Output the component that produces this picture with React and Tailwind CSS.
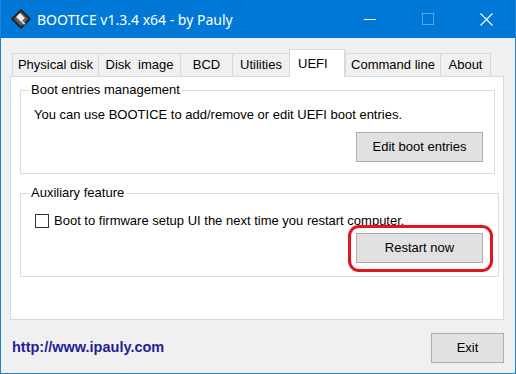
import React from "react";

const tabs = [
    { label: "Physical disk", w: "w-[86px]" },
    { label: "Disk  image", w: "w-[82px]" },
    { label: "BCD", w: "w-[52px]" },
    { label: "Utilities", w: "w-[57px]" },
    { label: "UEFI", w: "w-[56px]", active: true },
    { label: "Command line", w: "w-[95px]" },
    { label: "About", w: "w-[51px]" },
];

const AppIcon = () => (
    <svg width="20" height="20" viewBox="0 0 20 20">
        <polygon points="10,0.5 19.5,10 10,19.5 0.5,10" fill="#2e2e2e" stroke="#0d0d0d" strokeWidth="1" />
        <polygon points="10,3 17,10 10,17 3,10" fill="#5e5e5e" />
        <polygon points="9,4 14,9 10,13 5,8" fill="#ececec" stroke="#8a8a8a" strokeWidth="0.6" />
        <polygon points="11.5,11.5 14.5,14.5 13,16 10,13" fill="#d0d0d0" />
    </svg>
);

const Button = ({ children, className = "" }) => (
    <button className={"h-[30px] bg-[#e1e1e1] border border-[#adadad] text-[13px] text-black " + className}>
        {children}
    </button>
);

const App = () => {
    return (
        <div
            className="w-[516px] h-[374px] bg-[#f0f0f0] border-x border-b border-[#1883d7] flex flex-col text-black"
            style={{ fontFamily: '"Liberation Sans", Arial, sans-serif' }}
        >
            {/* title bar */}
            <div className="h-[38px] shrink-0 bg-[#0078d7] flex items-center text-white">
                <div className="ml-[10px] mr-[6px] flex items-center">
                    <AppIcon />
                </div>
                <span className="text-[14px]" style={{ fontFamily: '"Noto Sans", "Open Sans", sans-serif' }}>
                    BOOTICE v1.3.4 x64 - by Pauly
                </span>
                <div className="ml-auto flex h-full">
                    <div className="w-[58px] flex items-center justify-center">
                        <div className="w-[12px] h-px bg-white" />
                    </div>
                    <div className="w-[58px] flex items-center justify-center">
                        <div className="w-[12px] h-[12px] border border-[#5aa6e6]" />
                    </div>
                    <div className="w-[58px] flex items-center justify-center">
                        <svg width="13" height="13" viewBox="0 0 13 13">
                            <path d="M0.5 0.5L12.5 12.5M12.5 0.5L0.5 12.5" stroke="#fff" strokeWidth="1.1" />
                        </svg>
                    </div>
                </div>
            </div>

            {/* tabs */}
            <div className="mt-[11px] ml-[11px] flex items-end h-[27px]">
                {tabs.map((t, i) =>
                    t.active ? (
                        <div
                            key={t.label}
                            className={t.w + " relative z-10 -mb-px h-[28px] bg-white border-x border-t border-[#d9d9d9] pl-[8px] pt-[4px] text-[13px]"}
                        >
                            {t.label}
                        </div>
                    ) : (
                        <div
                            key={t.label}
                            className={
                                t.w +
                                " h-[23px] bg-[#f0f0f0] border-t border-l border-[#d9d9d9] flex items-center justify-center text-[13px] whitespace-pre" +
                                (i === tabs.length - 1 ? " border-r" : "")
                            }
                        >
                            {t.label}
                        </div>
                    )
                )}
            </div>

            {/* panel */}
            <div className="ml-[9px] w-[494px] h-[244px] bg-white border border-[#d9d9d9] flex flex-col">
                <div className="relative mt-[13px] ml-[9px] w-[475px] h-[84px] border border-[#dcdcdc] flex flex-col">
                    <span className="absolute -top-[9px] left-[8px] bg-white px-[2px] text-[13px] leading-[16px]">
                        Boot entries management
                    </span>
                    <p className="mt-[16px] ml-[13px] text-[13px] leading-[16px]">
                        You can use BOOTICE to add/remove or edit UEFI boot entries.
                    </p>
                    <div className="mt-[9px] mr-[11px] flex justify-end">
                        <Button className="w-[127px]">Edit boot entries</Button>
                    </div>
                </div>

                <div className="relative mt-[19px] ml-[9px] w-[479px] h-[84px] border border-[#dcdcdc] flex flex-col">
                    <span className="absolute -top-[9px] left-[8px] bg-white px-[2px] text-[13px] leading-[16px]">
                        Auxiliary feature
                    </span>
                    <label className="mt-[19px] ml-[14px] flex items-center gap-[5px] text-[13px] leading-[16px]">
                        <span className="w-[14px] h-[14px] border border-[#333] bg-white shrink-0" />
                        Boot to firmware setup UI the next time you restart computer.
                    </label>
                    <div className="mt-[4px] mr-[15px] flex justify-end">
                        <span className="relative">
                            <Button className="w-[127px]">Restart now</Button>
                            <span className="absolute -left-[8px] -right-[10px] -top-[8px] -bottom-[9px] border-[3px] border-[#e5141c] rounded-[11px]" />
                        </span>
                    </div>
                </div>
            </div>

            {/* footer */}
            <div className="flex-1 flex items-center justify-between pl-[11px] pr-[11px] pt-[2px]">
                <a className="text-[14.5px] font-bold text-[#1f1f97]">http://www.ipauly.com</a>
                <Button className="w-[73px] h-[28px]">Exit</Button>
            </div>
        </div>
    );
};

export default App;
